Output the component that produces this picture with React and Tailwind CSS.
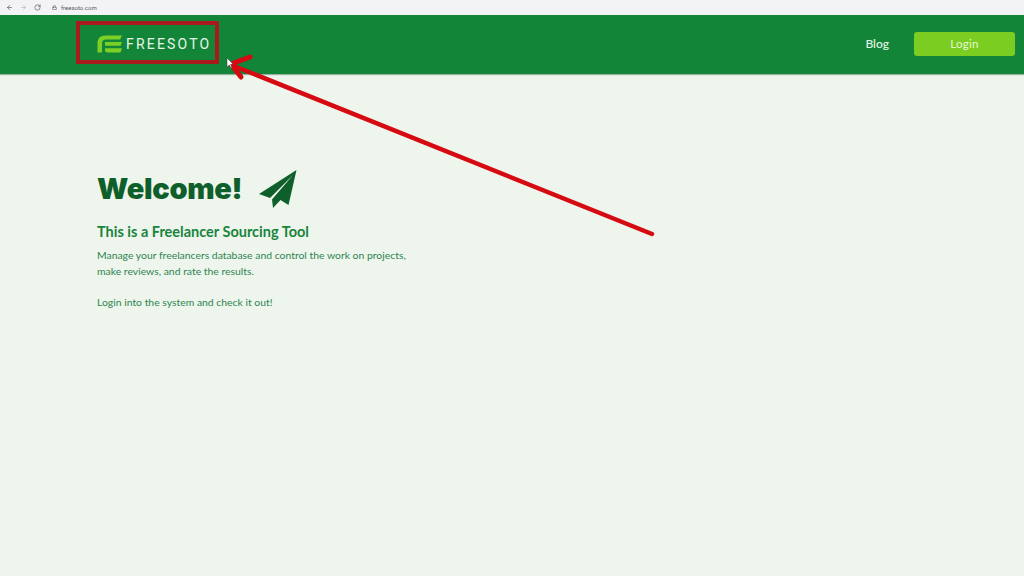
import React from "react";
import { ArrowLeft, ArrowRight, RotateCw, Lock } from "lucide-react";

function Logo() {
  return (
    <svg width="25" height="18" viewBox="0 0 25 18" fill="#7ccf25">
      <path d="M25 0.5H8.5C3.5 0.5 0.5 3.5 0.5 8V17.5H5V8.5C5 6 6.5 4.5 9 4.5H23Z" />
      <path d="M8 7H25L23.5 10.8H8Z" />
      <path d="M8 13.2H25L23.5 17.5H10.5C8.8 17.5 8 16.5 8 15Z" />
    </svg>
  );
}

function Plane() {
  return (
    <svg width="38" height="38" viewBox="0 0 38 38" fill="#0f5f2b">
      <path d="M37.5 0L0 24L11 28L34 5L13 29.5L14 38L21.5 30L29.5 35Z" />
    </svg>
  );
}

export default function App() {
  return (
    <div className="relative flex h-[576px] w-[1024px] flex-col overflow-hidden bg-[#edf5ed] font-['Lato',sans-serif]">
      <div className="flex h-[15px] shrink-0 items-center bg-[#f3f3f6] pl-[6px] text-[#5f6368]">
        <ArrowLeft size={7} strokeWidth={2.5} />
        <ArrowRight size={7} strokeWidth={2.5} className="ml-[7px] text-[#b8babd]" />
        <RotateCw size={7} strokeWidth={2.5} className="ml-[7px]" />
        <Lock size={5} strokeWidth={3} className="ml-[11px]" />
        <span className="ml-[4px] font-['Roboto',sans-serif] text-[6px] leading-none text-[#55585c]">freesoto.com</span>
      </div>

      <header className="flex h-[59px] shrink-0 items-center justify-between bg-[#138538] pr-[9px] pb-[2px] pl-[97px] shadow-[0_1px_1px_rgba(0,60,20,0.35)]">
        <div className="flex items-center gap-[4px]">
          <Logo />
          <span className="font-['Roboto',sans-serif] text-[14px] leading-none tracking-[2.2px] text-[#e6f5e8]">FREESOTO</span>
        </div>
        <div className="flex items-center gap-[25px]">
          <span className="text-[12px] font-medium text-[#e3f5e6]">Blog</span>
          <button className="flex h-[24px] w-[101px] items-center justify-center rounded-[3px] bg-[#7bcd22] text-[11.5px] tracking-[0.3px] text-[#e7f8d2]">
            Login
          </button>
        </div>
      </header>

      <main className="flex flex-col items-start pt-[96px] pl-[97px]">
        <div className="flex items-center gap-[17px]">
          <h1 className="font-['Inter',sans-serif] text-[29px] leading-[38px] font-black tracking-[-0.3px] text-[#0f5f2b]">Welcome!</h1>
          <Plane />
        </div>
        <h2 className="mt-[14px] text-[14.5px] leading-[20px] font-bold text-[#1a843c]">This is a Freelancer Sourcing Tool</h2>
        <p className="mt-[5px] text-[10.4px] leading-[16px] text-[#2f8450]">
          Manage your freelancers database and control the work on projects,
          <br />
          make reviews, and rate the results.
        </p>
        <p className="mt-[15px] text-[10.4px] leading-[16px] text-[#2f8450]">Login into the system and check it out!</p>
      </main>

      <div className="absolute top-[21px] left-[76px] h-[43px] w-[143px] border-4 border-[#a81a1c]" />

      <svg className="pointer-events-none absolute inset-0" width="1024" height="576" viewBox="0 0 1024 576" fill="none">
        <g stroke="#d60a11" strokeLinecap="round" strokeLinejoin="round">
          <path d="M652 234L234 66" strokeWidth="4.5" />
          <path d="M250 57L231 64L241 77" strokeWidth="5" />
        </g>
        <path d="M227 58L227 67L229.3 65L231 68L232 67.4L230.5 64.6L233 64Z" fill="#ffffff" stroke="#222" strokeWidth="0.4" />
      </svg>
    </div>
  );
}
